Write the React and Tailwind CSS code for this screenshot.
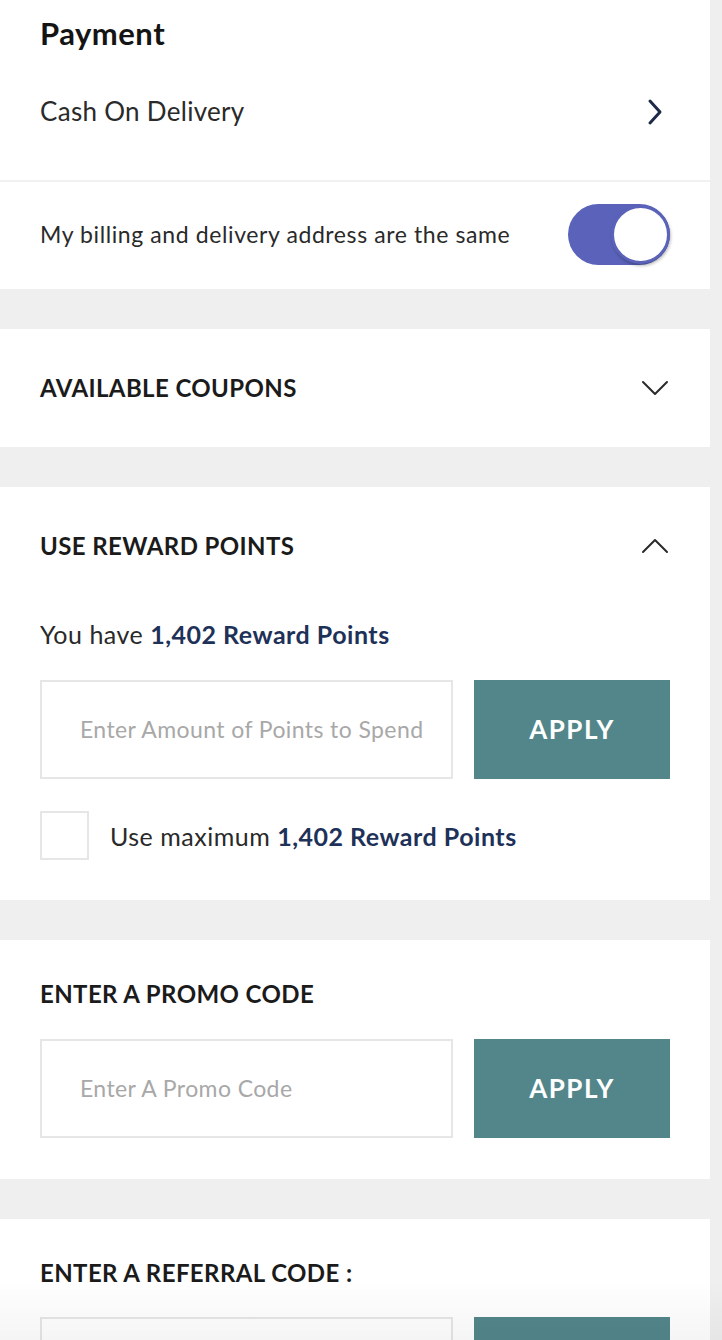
const font = { fontFamily: '"Lato", "Noto Sans", sans-serif' }

function Card({ children, className = '' }) {
  return <section className={`w-[710px] bg-white ${className}`}>{children}</section>
}

function Heading({ children }) {
  return <h2 className="text-[24px] font-bold uppercase leading-[30px] tracking-[0.4px] text-[#1b1b1b]">{children}</h2>
}

function Chevron({ dir }) {
  const d = dir === 'up' ? 'M2 15 L14 3 L26 15' : 'M2 3 L14 15 L26 3'
  return (
    <svg width="28" height="18" viewBox="0 0 28 18" fill="none" aria-hidden="true" className="mr-[1px]">
      <path d={d} stroke="#2a2a2a" strokeWidth="2" strokeLinecap="round" strokeLinejoin="round" />
    </svg>
  )
}

// the referral row sits below the fold, so its placeholder and label stay empty
function CodeRow({ placeholder, label = 'APPLY' }) {
  return (
    <div className="flex gap-[21px]">
      <div className="flex h-[99px] w-[413px] items-center border-2 border-[#e6e6e6] pl-[38px]">
        {placeholder && <span className="text-[23px] tracking-[0.4px] text-[#a8a8a8]">{placeholder}</span>}
      </div>
      <button type="button" className="flex h-[99px] w-[196px] items-center justify-center bg-[#52868b] text-[26px] font-bold tracking-[1.5px] text-white">
        {label}
      </button>
    </div>
  )
}

export default function App() {
  return (
    <div className="relative h-[1340px] overflow-hidden bg-[#efefef]" style={font}>
      <Card>
        <div className="px-10 pt-[14px]">
          <h1 className="text-[31px] font-bold leading-[38px] tracking-[0.5px] text-[#141414]">Payment</h1>
          <div className="flex h-[128px] items-center justify-between pb-[9px]">
            <span className="text-[26px] tracking-[0.3px] text-[#2a2a2a]">Cash On Delivery</span>
            <svg width="16" height="28" viewBox="0 0 16 28" fill="none" aria-hidden="true" className="mr-[7px]">
              <path d="M3 3 L13 14 L3 25" stroke="#1d2b4a" strokeWidth="3" strokeLinecap="round" strokeLinejoin="round" />
            </svg>
          </div>
        </div>
        <div className="h-[2px] bg-[#f1f1f1]" />
        <div className="flex h-[107px] items-center justify-between px-10 pb-[3px]">
          <span className="text-[23px] tracking-[0.6px] text-[#2a2a2a]">My billing and delivery address are the same</span>
          <div className="flex h-[61px] w-[102px] items-center justify-end rounded-full bg-[#5a63b9]">
            <div className="h-[59px] w-[59px] rounded-full border-[3px] border-[#5a63b9] bg-white shadow-[1px_2px_3px_rgba(0,0,0,0.25)]" />
          </div>
        </div>
      </Card>

      <Card className="mt-[40px]">
        <div className="flex h-[118px] items-center justify-between px-10">
          <Heading>Available Coupons</Heading>
          <Chevron dir="down" />
        </div>
      </Card>

      <Card className="mt-[40px] px-10 pb-[40px]">
        <div className="flex h-[118px] items-center justify-between">
          <Heading>Use Reward Points</Heading>
          <Chevron dir="up" />
        </div>
        <p className="mt-[14px] text-[25px] leading-[30px] tracking-[0.5px] text-[#2a2a2a]">
          You have <span className="font-bold text-[#1e3158]">1,402 Reward Points</span>
        </p>
        <div className="mt-[31px]">
          <CodeRow placeholder="Enter Amount of Points to Spend" />
        </div>
        <div className="mt-[32px] flex items-center gap-[21px]">
          <div className="h-[49px] w-[49px] border-2 border-[#e6e6e6]" />
          <span className="text-[25px] leading-[30px] tracking-[0.5px] text-[#2a2a2a]">
            Use maximum <span className="font-bold text-[#1e3158]">1,402 Reward Points</span>
          </span>
        </div>
      </Card>

      <Card className="mt-[40px] px-10 pb-[41px]">
        <div className="flex h-[99px] items-center pt-[9px]">
          <Heading>Enter a Promo Code</Heading>
        </div>
        <CodeRow placeholder="Enter A Promo Code" />
      </Card>

      <Card className="mt-[40px] px-10 pb-[41px]">
        <div className="flex h-[98px] items-center pt-[9px]">
          <Heading>Enter a Referral Code :</Heading>
        </div>
        <CodeRow placeholder="" label="" />
      </Card>

      <div className="pointer-events-none absolute inset-x-0 bottom-0 h-[60px] bg-gradient-to-b from-black/0 to-black/[0.04]" />
    </div>
  )
}
